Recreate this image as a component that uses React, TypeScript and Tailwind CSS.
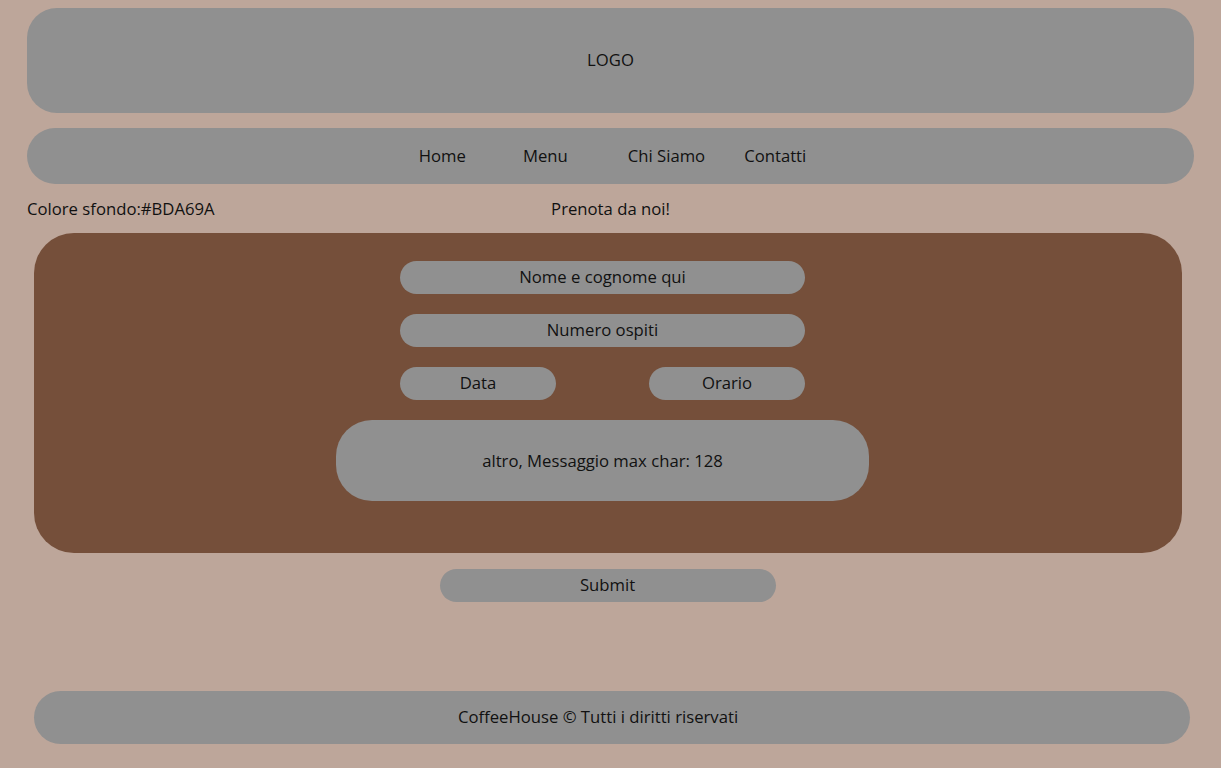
export default function App() {
  return (
    <div
      className="min-h-[768px] bg-[#BDA69A] text-[#111] pt-2 pb-6"
      style={{ fontFamily: '"Open Sans", "Noto Sans", sans-serif' }}
    >
      {/* Header */}
      <header className="mx-[27px] flex h-[105px] items-center justify-center rounded-[30px] bg-[#909090] pb-[2px] text-[16.7px]">
        LOGO
      </header>

      {/* Nav */}
      <nav className="mx-[27px] mt-[15px] flex h-[56px] items-center justify-center rounded-full bg-[#909090] pl-[4px] text-[16.7px]">
        <a>Home</a>
        <a className="ml-[57px]">Menu</a>
        <a className="ml-[60px]">Chi Siamo</a>
        <a className="ml-[39px]">Contatti</a>
      </nav>

      {/* Title row */}
      <div className="mx-[27px] mt-[12px] grid h-[26px] grid-cols-[1fr_auto_1fr] items-center text-[16.7px]">
        <p>Colore sfondo:#BDA69A</p>
        <p>Prenota da noi!</p>
        <span />
      </div>

      {/* Form */}
      <form className="ml-[34px] mr-[39px] mt-[11px] flex flex-col items-center rounded-[40px] bg-[#754F3A] pb-[52px] pr-[11px] pt-[28px] text-[16.7px]">
        <div className="flex h-[33px] w-[405px] items-center justify-center rounded-full bg-[#909090] pb-[2px]">
          Nome e cognome qui
        </div>
        <div className="mt-[20px] flex h-[33px] w-[405px] items-center justify-center rounded-full bg-[#909090] pb-[2px]">
          Numero ospiti
        </div>
        <div className="mt-[20px] flex w-[405px] justify-between">
          <div className="flex h-[33px] w-[156px] items-center justify-center rounded-full bg-[#909090] pb-[2px]">
            Data
          </div>
          <div className="flex h-[33px] w-[156px] items-center justify-center rounded-full bg-[#909090] pb-[2px]">
            Orario
          </div>
        </div>
        <div className="mt-[20px] flex h-[81px] w-[533px] items-center justify-center rounded-[36px] bg-[#909090]">
          altro, Messaggio max char: 128
        </div>
      </form>

      {/* Submit */}
      <div className="mt-[16px] flex justify-center pr-[6px]">
        <button className="flex h-[33px] w-[336px] items-center justify-center rounded-full bg-[#909090] pb-[2px] text-[16.7px]">
          Submit
        </button>
      </div>

      {/* Footer */}
      <footer className="ml-[34px] mr-[31px] mt-[89px] flex h-[53px] items-center justify-center rounded-full bg-[#909090] pb-[2px] pr-[28px] text-[16.7px]">
        CoffeeHouse © Tutti i diritti riservati
      </footer>
    </div>
  );
}
